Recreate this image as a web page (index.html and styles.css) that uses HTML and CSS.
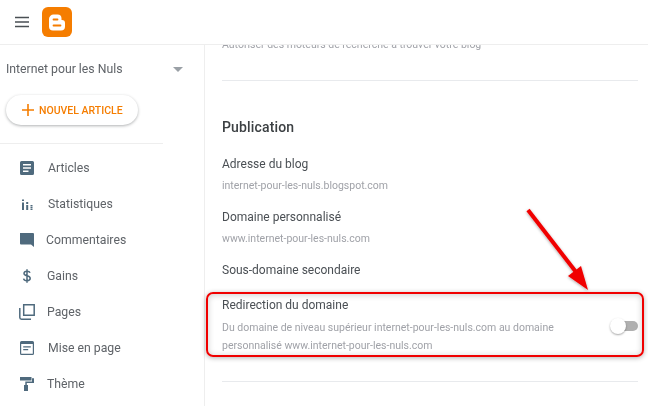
FILE: index.html
```html
<!DOCTYPE html>
<html lang="fr">
<head>
<meta charset="utf-8">
<title>Blogger</title>
<link rel="stylesheet" href="styles.css">
</head>
<body>
<div class="app">
  <header class="topbar">
    <svg class="menu" width="16" height="12" viewBox="0 0 16 12"><path d="M1 1.500h14M1 6h14M1 10.500h14" stroke="#4a4f54" stroke-width="1.500" fill="none"/></svg>
    <svg class="logo" width="30" height="30" viewBox="0 0 30 30">
      <rect width="30" height="30" rx="6" fill="#f57d00"/>
      <path d="M12 7.500h3.500a4 4 0 0 1 4 4v1.500h.5a3 3 0 0 1 3 3v3.500a4 4 0 0 1-4 4H11a4 4 0 0 1-4-4V12a4.500 4.500 0 0 1 5-4.500z" fill="#fff"/>
      <path d="M11.500 12.500h4M11.500 18.500h7" stroke="#f57d00" stroke-width="1.800" stroke-linecap="round"/>
    </svg>
  </header>
  <div class="body">
    <aside class="sidebar">
      <div class="blog-select">
        <span>Internet pour les Nuls</span>
        <i class="caret"></i>
      </div>
      <button class="new-post">
        <svg width="12" height="12" viewBox="0 0 12 12"><path d="M6 0v12M0 6h12" stroke="#f57d00" stroke-width="1.600"/></svg>
        <span>NOUVEL ARTICLE</span>
      </button>
      <div class="side-rule"></div>
      <nav class="nav">
        <a class="item"><svg viewBox="0 0 14 14"><path fill="#4f6a7d" fill-rule="evenodd" d="M1.500 0h11A1.500 1.500 0 0 1 14 1.500v11a1.500 1.500 0 0 1-1.500 1.500h-11A1.500 1.500 0 0 1 0 12.500v-11A1.500 1.500 0 0 1 1.500 0zM3 3v1.500h8V3zM3 6.200v1.500h8V6.200zM3 9.400v1.500h5.500V9.400z"/></svg><span class="t48">Articles</span></a>
        <a class="item"><svg viewBox="0 0 14 14"><path fill="#4f6a7d" d="M2 2.500h2v1.600H2zM2 5.500h2v7.500H2zM6.200 5h2v2H6.200zM6.200 8h2v5h-2zM10.500 8h2v1.400h-2zM10.500 10h2v1.200h-2zM10.500 11.800h2V13h-2z"/></svg><span class="t48">Statistiques</span></a>
        <a class="item"><svg viewBox="0 0 14 14"><path fill="#4f6a7d" d="M0 0h13a1 1 0 0 1 1 1v13l-3-2.500H1a1 1 0 0 1-1-1z"/></svg><span class="t46">Commentaires</span></a>
        <a class="item"><svg viewBox="0 0 14 14"><path fill="none" stroke="#4f6a7d" stroke-width="1.500" d="M10 3.800C9.700 2.700 8.500 2.200 7 2.200c-1.700 0-3 .8-3 2.200 0 3 6.200 1.500 6.200 4.900 0 1.500-1.400 2.400-3.200 2.400-1.700 0-3.100-.7-3.400-2.100M7 .2v13.600"/></svg><span class="t47">Gains</span></a>
        <a class="item"><svg viewBox="0 0 16 16" class="wide"><path fill="none" stroke="#4f6a7d" stroke-width="1.500" d="M4.700.8h10.500v10.500H4.700zM.8 4v9.500a1.700 1.700 0 0 0 1.700 1.700H12"/></svg><span class="t47">Pages</span></a>
        <a class="item"><svg viewBox="0 0 14 14"><path fill="#4f6a7d" fill-rule="evenodd" d="M1.500 0h11A1.500 1.500 0 0 1 14 1.500v11a1.500 1.500 0 0 1-1.500 1.500h-11A1.500 1.500 0 0 1 0 12.500v-11A1.500 1.500 0 0 1 1.500 0zM1.200 3v9.400c0 .3.100.4.400.4h10.800c.3 0 .4-.1.400-.4V3zM3.200 5.200h7.600v1.200H3.200zM3.200 8h5v1.200h-5z"/></svg><span class="t48">Mise en page</span></a>
        <a class="item"><svg viewBox="0 0 14 14"><path fill="#4f6a7d" d="M0 0h11.500v3.500H0zM12 1.300h2v4.700H6.800v2H8v6H4v-6h1.300V4.500H12z"/></svg><span class="t47">Thème</span></a>
      </nav>
    </aside>
    <main class="content">
      <p class="clipped">Autoriser des moteurs de recherche à trouver votre blog</p>
      <hr class="rule">
      <h2 class="section">Publication</h2>
      <div class="setting first">
        <h3>Adresse du blog</h3>
        <p>internet-pour-les-nuls.blogspot.com</p>
      </div>
      <div class="setting">
        <h3>Domaine personnalisé</h3>
        <p>www.internet-pour-les-nuls.com</p>
      </div>
      <div class="setting">
        <h3>Sous-domaine secondaire</h3>
      </div>
      <div class="setting redirect">
        <div class="redirect-text">
          <h3>Redirection du domaine</h3>
          <p>Du domaine de niveau supérieur internet-pour-les-nuls.com au domaine personnalisé www.internet-pour-les-nuls.com</p>
        </div>
        <div class="toggle"><i></i></div>
      </div>
      <hr class="rule bottom">
    </main>
  </div>
  <div class="callout"></div>
  <svg class="arrow" width="80" height="95" viewBox="0 0 80 95">
    <defs><filter id="sh" x="-20%" y="-20%" width="140%" height="140%"><feDropShadow dx="0" dy="1" stdDeviation="1.500" flood-color="#000" flood-opacity=".35"/></filter></defs>
    <g filter="url(#sh)">
      <path d="M6 4 L54 66" stroke="#f00000" stroke-width="4" fill="none"/>
      <path d="M46 70 L59 60 L66 84z" fill="#f00000"/>
    </g>
  </svg>
</div>
</body>
</html>
```
FILE: styles.css
```css
html, body { margin: 0; padding: 0; background: #fff; }
body { font-family: Roboto, "Liberation Sans", sans-serif; color: #3c4043; }
.app { position: relative; width: 648px; height: 406px; overflow: hidden; display: flex; flex-direction: column; filter: blur(.3px); }
.topbar { height: 44px; flex: none; display: flex; align-items: center; border-bottom: 1px solid #eeeeee; padding-left: 14px; background: #fff; position: relative; z-index: 1; }
.menu { flex: none; }
.logo { flex: none; margin-left: 12px; margin-top: -1px; }
.body { flex: 1; min-height: 0; display: flex; }
.sidebar { width: 205px; flex: none; border-right: 1px solid #eeeeee; box-sizing: border-box; }
.blog-select { display: flex; align-items: center; justify-content: space-between; height: 44px; padding: 0 21px 0 6px; margin-top: 2px; font-size: 12.250px; color: #5f6368; }
.caret { width: 0; height: 0; border: 5px solid transparent; border-top-color: #9aa0a6; border-bottom: 0; }
.new-post { display: flex; align-items: center; gap: 5px; height: 30px; width: 132px; margin: 4px 0 0 6px; padding: 0 0 0 16px; border: 0; border-radius: 15px; background: #fff; box-shadow: 0 1px 3px rgba(60,64,67,.4); color: #f57d00; font: 500 10.500px Roboto, sans-serif; }
.side-rule { width: 163px; height: 1px; background: #eeeeee; margin-top: 18px; }
.nav { display: flex; flex-direction: column; padding-top: 6px; }
.item { height: 36px; display: flex; align-items: center; padding-left: 20px; font-size: 12.250px; color: #5f6368; }
.item svg { width: 14px; height: 14px; flex: none; }
.item svg.wide { width: 16px; height: 16px; margin-left: -1px; margin-right: -1px; }
.t46 { margin-left: 12px; }
.t47 { margin-left: 13px; }
.t48 { margin-left: 14px; }
.content { flex: 1; min-width: 0; overflow: hidden; padding: 0 10px 0 17px; }
.clipped { margin: -8px 0 0; font-size: 10.500px; line-height: 16px; color: #a0a2a8; }
.rule { border: 0; height: 1px; background: #e8eaed; margin: 27px 0 0; }
.section { margin: 37px 0 0; font-size: 14px; font-weight: 500; line-height: 18px; color: #3c4043; letter-spacing: .15px; }
.setting h3 { margin: 0; font-size: 12px; font-weight: 400; line-height: 16px; color: #4a4f54; }
.setting p { margin: 5px 0 0; font-size: 10.500px; line-height: 18px; color: #a0a2a8; }
.setting { margin-top: 14px; }
.setting.first { margin-top: 20px; }
.redirect { display: flex; align-items: center; margin-top: 19px; }
.redirect-text { flex: 1; min-width: 0; padding-right: 34px; }
.redirect-text p { margin-top: 6px; }
.toggle { width: 22px; height: 10px; position: relative; flex: none; border-radius: 5px; background: #b0b0b0; }
.toggle i { position: absolute; left: -6px; top: -3px; width: 16px; height: 16px; border-radius: 50%; background: #fff; box-shadow: 0 1px 2px rgba(0,0,0,.35); }
.rule.bottom { margin-top: 26px; }
.callout { position: absolute; left: 206px; top: 292px; width: 434px; height: 61px; border: 2px solid #f00000; border-radius: 7px; box-shadow: 0 1px 5px rgba(0,0,0,.3), inset 0 1px 6px rgba(0,0,0,.2); }
.arrow { position: absolute; left: 522px; top: 206px; }
```
